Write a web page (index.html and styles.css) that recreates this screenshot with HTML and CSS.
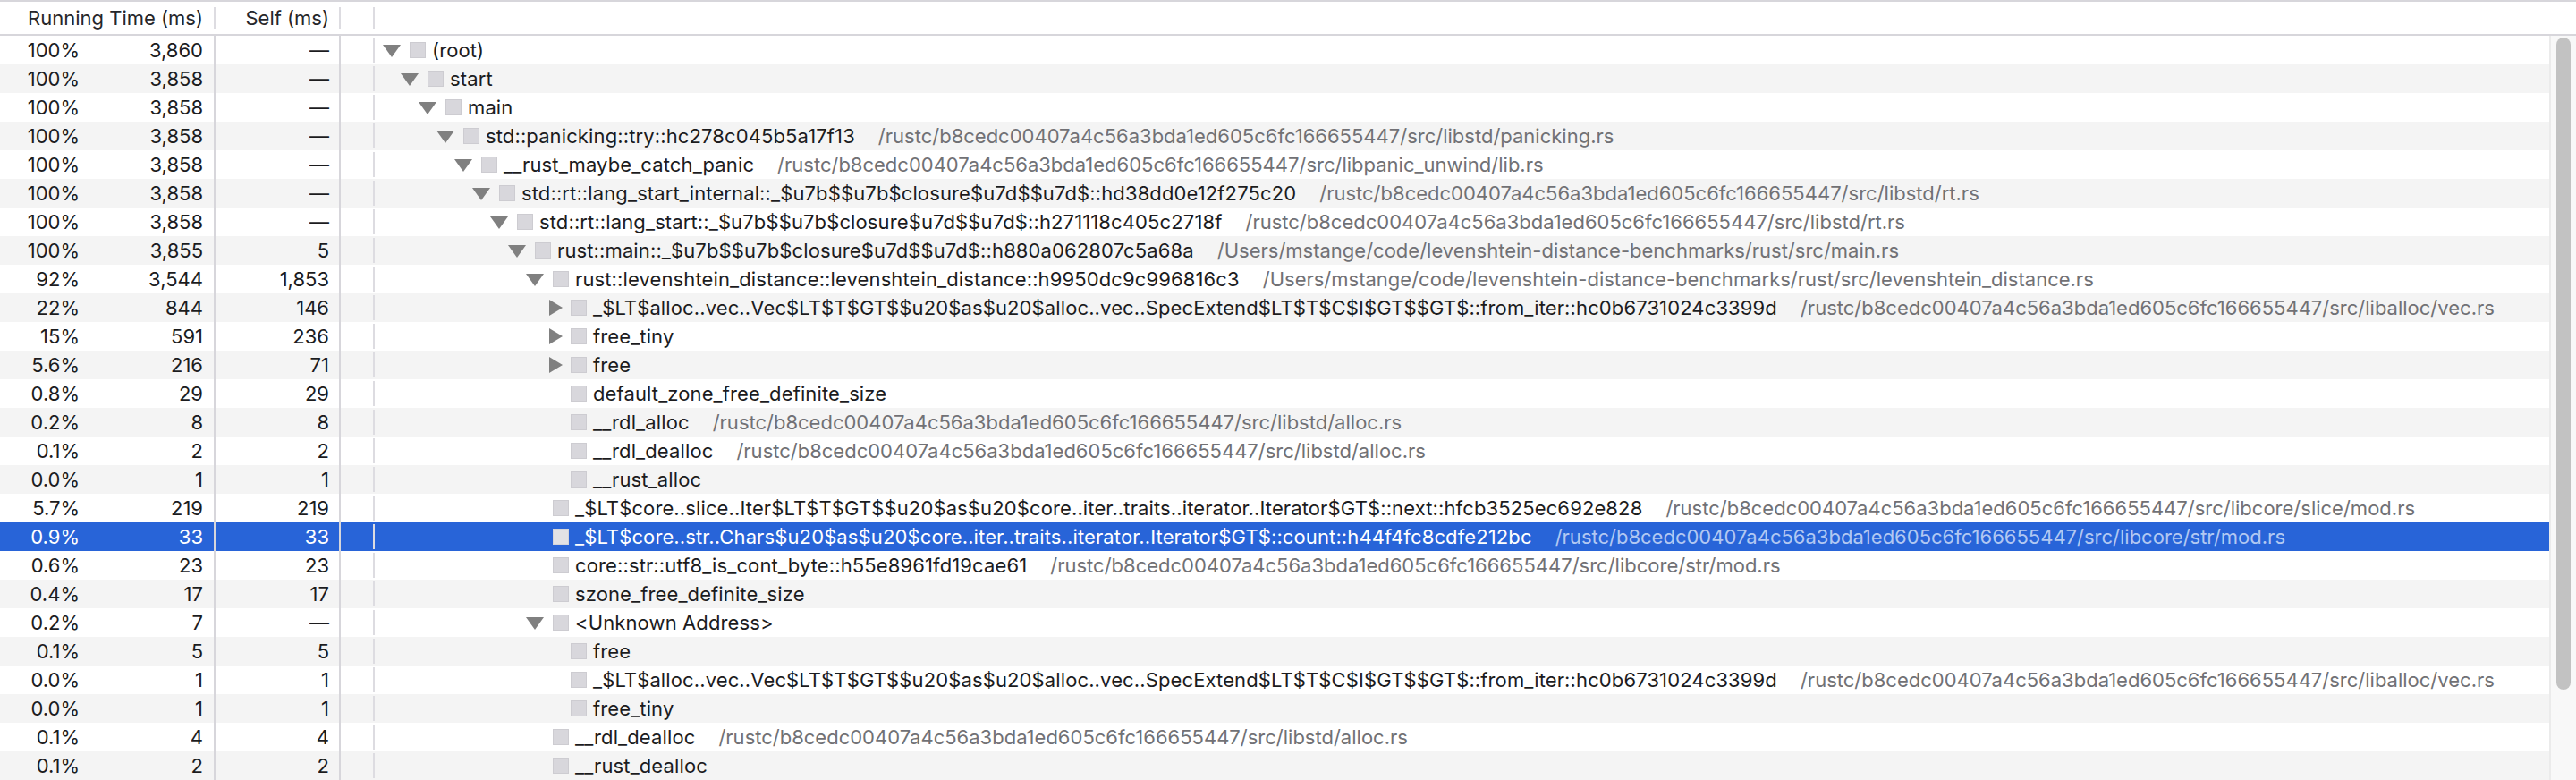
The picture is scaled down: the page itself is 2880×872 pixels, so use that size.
FILE: index.html
```html
<!DOCTYPE html>
<html>
<head>
<meta charset="utf-8">
<link rel="stylesheet" href="styles.css">
</head>
<body>
<div class="calltree">
  <div class="head">
    <div class="h-total">Running Time (ms)</div>
    <div class="h-self">Self (ms)</div>
    <div class="h-icon"></div>
    <div class="h-tree"></div>
  </div>
  <div class="body">
    <div class="rows">
      <div class="row"><div class="c-total"><span class="pct">100%</span><span class="num">3,860</span></div><div class="c-self">—</div><div class="c-icon"></div><div class="c-tree d0"><span class="tw open"></span><span class="sq"></span><span class="fn">(root)</span></div></div>
      <div class="row alt"><div class="c-total"><span class="pct">100%</span><span class="num">3,858</span></div><div class="c-self">—</div><div class="c-icon"></div><div class="c-tree d1"><span class="tw open"></span><span class="sq"></span><span class="fn">start</span></div></div>
      <div class="row"><div class="c-total"><span class="pct">100%</span><span class="num">3,858</span></div><div class="c-self">—</div><div class="c-icon"></div><div class="c-tree d2"><span class="tw open"></span><span class="sq"></span><span class="fn">main</span></div></div>
      <div class="row alt"><div class="c-total"><span class="pct">100%</span><span class="num">3,858</span></div><div class="c-self">—</div><div class="c-icon"></div><div class="c-tree d3"><span class="tw open"></span><span class="sq"></span><span class="fn">std::panicking::try::hc278c045b5a17f13</span><span class="lib">/rustc/b8cedc00407a4c56a3bda1ed605c6fc166655447/src/libstd/panicking.rs</span></div></div>
      <div class="row"><div class="c-total"><span class="pct">100%</span><span class="num">3,858</span></div><div class="c-self">—</div><div class="c-icon"></div><div class="c-tree d4"><span class="tw open"></span><span class="sq"></span><span class="fn">__rust_maybe_catch_panic</span><span class="lib">/rustc/b8cedc00407a4c56a3bda1ed605c6fc166655447/src/libpanic_unwind/lib.rs</span></div></div>
      <div class="row alt"><div class="c-total"><span class="pct">100%</span><span class="num">3,858</span></div><div class="c-self">—</div><div class="c-icon"></div><div class="c-tree d5"><span class="tw open"></span><span class="sq"></span><span class="fn">std::rt::lang_start_internal::_$u7b$$u7b$closure$u7d$$u7d$::hd38dd0e12f275c20</span><span class="lib">/rustc/b8cedc00407a4c56a3bda1ed605c6fc166655447/src/libstd/rt.rs</span></div></div>
      <div class="row"><div class="c-total"><span class="pct">100%</span><span class="num">3,858</span></div><div class="c-self">—</div><div class="c-icon"></div><div class="c-tree d6"><span class="tw open"></span><span class="sq"></span><span class="fn">std::rt::lang_start::_$u7b$$u7b$closure$u7d$$u7d$::h271118c405c2718f</span><span class="lib">/rustc/b8cedc00407a4c56a3bda1ed605c6fc166655447/src/libstd/rt.rs</span></div></div>
      <div class="row alt"><div class="c-total"><span class="pct">100%</span><span class="num">3,855</span></div><div class="c-self">5</div><div class="c-icon"></div><div class="c-tree d7"><span class="tw open"></span><span class="sq"></span><span class="fn">rust::main::_$u7b$$u7b$closure$u7d$$u7d$::h880a062807c5a68a</span><span class="lib">/Users/mstange/code/levenshtein-distance-benchmarks/rust/src/main.rs</span></div></div>
      <div class="row"><div class="c-total"><span class="pct">92%</span><span class="num">3,544</span></div><div class="c-self">1,853</div><div class="c-icon"></div><div class="c-tree d8"><span class="tw open"></span><span class="sq"></span><span class="fn">rust::levenshtein_distance::levenshtein_distance::h9950dc9c996816c3</span><span class="lib">/Users/mstange/code/levenshtein-distance-benchmarks/rust/src/levenshtein_distance.rs</span></div></div>
      <div class="row alt"><div class="c-total"><span class="pct">22%</span><span class="num">844</span></div><div class="c-self">146</div><div class="c-icon"></div><div class="c-tree d9"><span class="tw closed"></span><span class="sq"></span><span class="fn">_$LT$alloc..vec..Vec$LT$T$GT$$u20$as$u20$alloc..vec..SpecExtend$LT$T$C$I$GT$$GT$::from_iter::hc0b6731024c3399d</span><span class="lib">/rustc/b8cedc00407a4c56a3bda1ed605c6fc166655447/src/liballoc/vec.rs</span></div></div>
      <div class="row"><div class="c-total"><span class="pct">15%</span><span class="num">591</span></div><div class="c-self">236</div><div class="c-icon"></div><div class="c-tree d9"><span class="tw closed"></span><span class="sq"></span><span class="fn">free_tiny</span></div></div>
      <div class="row alt"><div class="c-total"><span class="pct">5.6%</span><span class="num">216</span></div><div class="c-self">71</div><div class="c-icon"></div><div class="c-tree d9"><span class="tw closed"></span><span class="sq"></span><span class="fn">free</span></div></div>
      <div class="row"><div class="c-total"><span class="pct">0.8%</span><span class="num">29</span></div><div class="c-self">29</div><div class="c-icon"></div><div class="c-tree d9"><span class="tw"></span><span class="sq"></span><span class="fn">default_zone_free_definite_size</span></div></div>
      <div class="row alt"><div class="c-total"><span class="pct">0.2%</span><span class="num">8</span></div><div class="c-self">8</div><div class="c-icon"></div><div class="c-tree d9"><span class="tw"></span><span class="sq"></span><span class="fn">__rdl_alloc</span><span class="lib">/rustc/b8cedc00407a4c56a3bda1ed605c6fc166655447/src/libstd/alloc.rs</span></div></div>
      <div class="row"><div class="c-total"><span class="pct">0.1%</span><span class="num">2</span></div><div class="c-self">2</div><div class="c-icon"></div><div class="c-tree d9"><span class="tw"></span><span class="sq"></span><span class="fn">__rdl_dealloc</span><span class="lib">/rustc/b8cedc00407a4c56a3bda1ed605c6fc166655447/src/libstd/alloc.rs</span></div></div>
      <div class="row alt"><div class="c-total"><span class="pct">0.0%</span><span class="num">1</span></div><div class="c-self">1</div><div class="c-icon"></div><div class="c-tree d9"><span class="tw"></span><span class="sq"></span><span class="fn">__rust_alloc</span></div></div>
      <div class="row"><div class="c-total"><span class="pct">5.7%</span><span class="num">219</span></div><div class="c-self">219</div><div class="c-icon"></div><div class="c-tree d8"><span class="tw"></span><span class="sq"></span><span class="fn">_$LT$core..slice..Iter$LT$T$GT$$u20$as$u20$core..iter..traits..iterator..Iterator$GT$::next::hfcb3525ec692e828</span><span class="lib">/rustc/b8cedc00407a4c56a3bda1ed605c6fc166655447/src/libcore/slice/mod.rs</span></div></div>
      <div class="row alt sel"><div class="c-total"><span class="pct">0.9%</span><span class="num">33</span></div><div class="c-self">33</div><div class="c-icon"></div><div class="c-tree d8"><span class="tw"></span><span class="sq"></span><span class="fn">_$LT$core..str..Chars$u20$as$u20$core..iter..traits..iterator..Iterator$GT$::count::h44f4fc8cdfe212bc</span><span class="lib">/rustc/b8cedc00407a4c56a3bda1ed605c6fc166655447/src/libcore/str/mod.rs</span></div></div>
      <div class="row"><div class="c-total"><span class="pct">0.6%</span><span class="num">23</span></div><div class="c-self">23</div><div class="c-icon"></div><div class="c-tree d8"><span class="tw"></span><span class="sq"></span><span class="fn">core::str::utf8_is_cont_byte::h55e8961fd19cae61</span><span class="lib">/rustc/b8cedc00407a4c56a3bda1ed605c6fc166655447/src/libcore/str/mod.rs</span></div></div>
      <div class="row alt"><div class="c-total"><span class="pct">0.4%</span><span class="num">17</span></div><div class="c-self">17</div><div class="c-icon"></div><div class="c-tree d8"><span class="tw"></span><span class="sq"></span><span class="fn">szone_free_definite_size</span></div></div>
      <div class="row"><div class="c-total"><span class="pct">0.2%</span><span class="num">7</span></div><div class="c-self">—</div><div class="c-icon"></div><div class="c-tree d8"><span class="tw open"></span><span class="sq"></span><span class="fn">&lt;Unknown Address&gt;</span></div></div>
      <div class="row alt"><div class="c-total"><span class="pct">0.1%</span><span class="num">5</span></div><div class="c-self">5</div><div class="c-icon"></div><div class="c-tree d9"><span class="tw"></span><span class="sq"></span><span class="fn">free</span></div></div>
      <div class="row"><div class="c-total"><span class="pct">0.0%</span><span class="num">1</span></div><div class="c-self">1</div><div class="c-icon"></div><div class="c-tree d9"><span class="tw"></span><span class="sq"></span><span class="fn">_$LT$alloc..vec..Vec$LT$T$GT$$u20$as$u20$alloc..vec..SpecExtend$LT$T$C$I$GT$$GT$::from_iter::hc0b6731024c3399d</span><span class="lib">/rustc/b8cedc00407a4c56a3bda1ed605c6fc166655447/src/liballoc/vec.rs</span></div></div>
      <div class="row alt"><div class="c-total"><span class="pct">0.0%</span><span class="num">1</span></div><div class="c-self">1</div><div class="c-icon"></div><div class="c-tree d9"><span class="tw"></span><span class="sq"></span><span class="fn">free_tiny</span></div></div>
      <div class="row"><div class="c-total"><span class="pct">0.1%</span><span class="num">4</span></div><div class="c-self">4</div><div class="c-icon"></div><div class="c-tree d8"><span class="tw"></span><span class="sq"></span><span class="fn">__rdl_dealloc</span><span class="lib">/rustc/b8cedc00407a4c56a3bda1ed605c6fc166655447/src/libstd/alloc.rs</span></div></div>
      <div class="row alt"><div class="c-total"><span class="pct">0.1%</span><span class="num">2</span></div><div class="c-self">2</div><div class="c-icon"></div><div class="c-tree d8"><span class="tw"></span><span class="sq"></span><span class="fn">__rust_dealloc</span></div></div>
    </div>
    <div class="scrollbar"><div class="thumb"></div></div>
  </div>
</div>
</body>
</html>
```

FILE: styles.css
```css
* { box-sizing: border-box; }
html, body { margin: 0; padding: 0; background: #fff; }
body {
  width: 2880px;
  height: 872px;
  overflow: hidden;
  font-family: Inter, "Liberation Sans", sans-serif;
  font-size: 22px;
  color: #1c1c1e;
}
.calltree { display: flex; flex-direction: column; height: 872px; }

.head {
  display: flex;
  height: 40px;
  border-top: 2px solid #d7d6db;
  border-bottom: 2px solid #d7d6db;
  line-height: 36px;
  color: #26262a;
  flex: none;
}
.head > div {
  background-image: linear-gradient(#dddce1, #dddce1);
  background-repeat: no-repeat;
  background-size: 2px 24px;
  background-position: right center;
}
.h-total { width: 241px; text-align: right; padding-right: 14px; }
.h-self { width: 140px; text-align: right; padding-right: 13px; }
.h-icon { width: 38px; }
.h-tree { flex: 1; background-image: none !important; }

.body { display: flex; flex: 1; min-height: 0; }
.rows { flex: 1; overflow: hidden; }
.row {
  display: flex;
  height: 32px;
  line-height: 32px;
  white-space: nowrap;
  background: #fff;
}
.row.alt { background: #f4f4f4; }
.row.sel { background: #2864d8; color: #fff; }

.c-total {
  width: 241px;
  display: flex;
  border-right: 2px solid #d7d6db;
  flex: none;
}
.pct { width: 89px; text-align: right; }
.num { flex: 1; text-align: right; padding-right: 12px; }
.c-self {
  width: 140px;
  text-align: right;
  padding-right: 11px;
  border-right: 2px solid #d7d6db;
  flex: none;
}
.c-icon {
  width: 38px;
  flex: none;
  background-image: linear-gradient(#dddce1, #dddce1);
  background-repeat: no-repeat;
  background-size: 2px 28px;
  background-position: right center;
}
.c-tree {
  flex: 1;
  display: flex;
  align-items: center;
  padding-left: 9px;
  overflow: hidden;
}
.d0 { padding-left: 9px; }
.d1 { padding-left: 29px; }
.d2 { padding-left: 49px; }
.d3 { padding-left: 69px; }
.d4 { padding-left: 89px; }
.d5 { padding-left: 109px; }
.d6 { padding-left: 129px; }
.d7 { padding-left: 149px; }
.d8 { padding-left: 169px; }
.d9 { padding-left: 189px; }

.tw { width: 30px; height: 18px; flex: none; }
.tw.open::before {
  content: "";
  display: block;
  width: 0; height: 0;
  margin-top: 3px;
  border-left: 10px solid transparent;
  border-right: 10px solid transparent;
  border-top: 14px solid #808080;
}
.tw.closed::before {
  content: "";
  display: block;
  width: 0; height: 0;
  margin-left: 6px;
  border-top: 9px solid transparent;
  border-bottom: 9px solid transparent;
  border-left: 15px solid #808080;
}
.sq {
  width: 18px;
  height: 18px;
  flex: none;
  background: #d8d7dc;
  border: 1px solid #cdccd1;
  margin-right: 7px;
}
.sel .sq { background: #e2e2e5; border-color: #d5d5da; }
.fn { flex: none; letter-spacing: 0.12px; }
.lib { flex: none; margin-left: 26px; color: #717175; }
.sel .lib { color: #b2c8f2; }

.scrollbar {
  width: 30px;
  flex: none;
  background: #f8f8f8;
  border-left: 2px solid #ebebeb;
  padding: 2px 0 0 6px;
}
.thumb {
  width: 16px;
  height: 729px;
  background: #c2c2c2;
  border-radius: 8px;
}
```
